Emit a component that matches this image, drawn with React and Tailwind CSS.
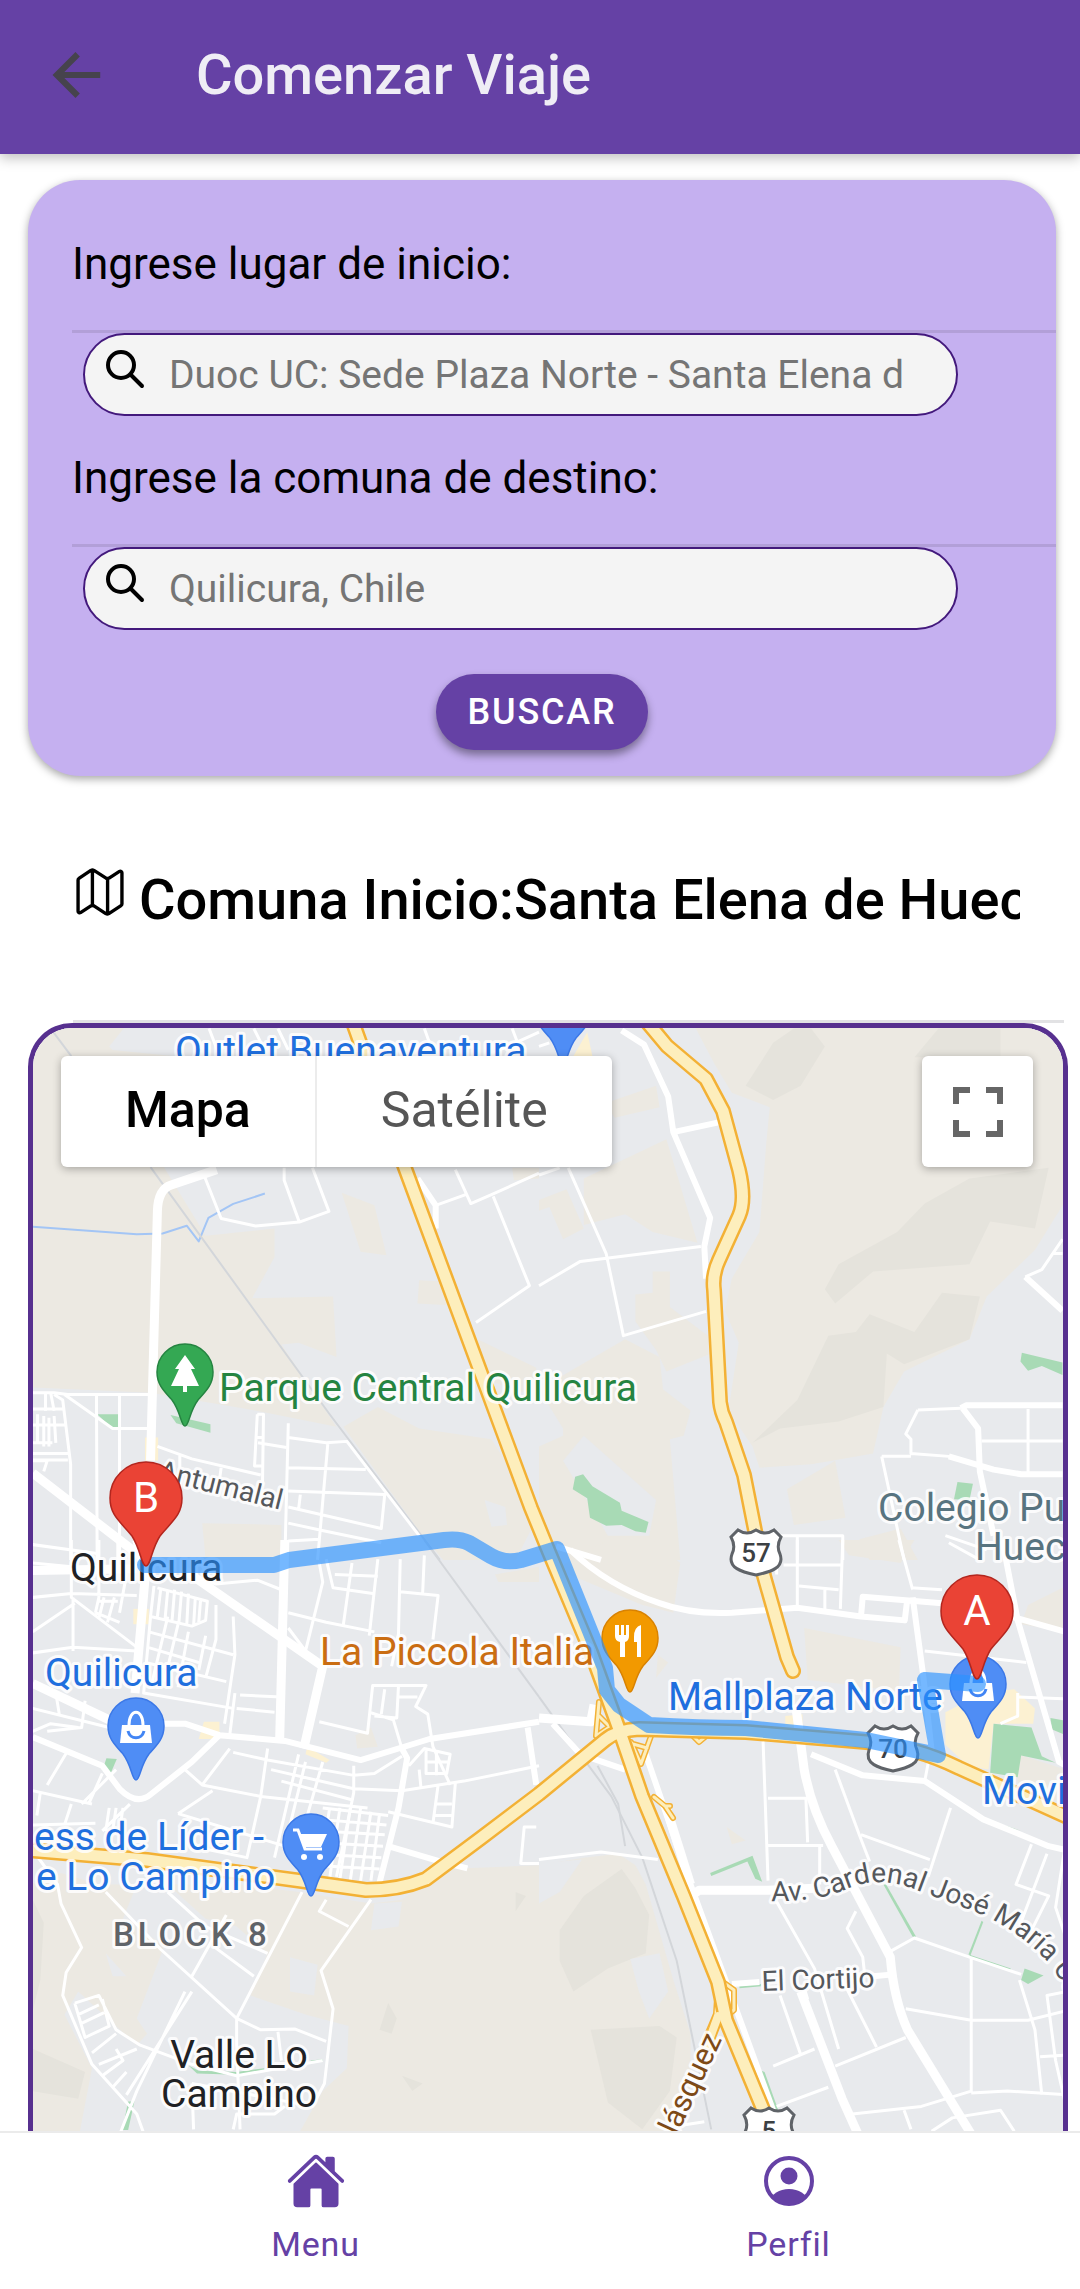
import React from "react";
import { IoArrowBackSharp, IoHome, IoMapOutline } from "react-icons/io5";

/* The map is drawn from four survey tiles, each with its own grid. */
const TILES = [
  {
    at: "translate(0 1000) scale(.3444 .3571)",
    land: [
      "M90 60H540L480 470L600 660L800 640V720L735 835L970 830L980 1000L870 960L820 965L980 1195L720 1145L440 1100L90 1085Z",
      "M1000 1195L1100 1140L1220 1200L1430 1230L1568 1440L1500 1568H1290L1230 1500Z",
      "M995 540L1090 575L1125 715L1050 705Z",
      "M1220 785L1320 790L1310 855L1215 850Z",
      "M590 1465L820 1470V1568H600Z",
      "M1390 950L1560 1030V1110L1400 1060Z",
      "M1490 470H1568V500L1495 505Z",
    ],
    shade: [],
    clear: ["M320 130L370 70H540V160L330 140Z", "M1410 1400L1470 1420L1475 1470L1430 1475Z"],
    green: ["M285 1160H347V1200H330Z", "M498 1162L614 1188V1212L515 1185Z"],
    sand: ["M424 1225H462V1290H424Z"],
    water: ["M98 635L400 656L475 654L545 632L580 676L608 610L680 571L772 542"],
    rail: ["M150 80L210 157", "M440 468L960 1160L1280 1568"],
    minor: [
      "M595 490L645 612L745 633L872 622L958 592L910 470M828 470V505L872 622",
      "M610 80L640 157M740 80L780 157M810 80L840 140M1235 80L1250 120M1430 150L1568 90M1490 80L1510 130",
      "M1325 475L1370 570L1430 545L1568 485M1268 575L1355 545M1435 550L1540 800L1385 903",
      "M98 1100H160L200 1105H436M190 1105L330 1200H436M283 1105L285 1568M350 1105V1568M160 1105L185 1120L208 1300V1568M98 1145H185M98 1190H190M98 1240H155M98 1270H200M98 1288H200",
      "M135 1100V1150M150 1100L160 1150M112 1160V1240M130 1165V1250M145 1170V1250M160 1165L165 1240",
      "M460 1250L560 1285L760 1330M525 1275V1310M645 1310L640 1345M750 1160H768L765 1360M750 1160L742 1305H765M752 1240L835 1253M750 1225H765",
      "M840 1185L830 1568M840 1225L950 1240L1010 1236L1220 1500M955 1240L925 1568M840 1310L1065 1315M840 1375L1120 1385L1110 1480L840 1420M840 1465L935 1485L1110 1520M875 1385L870 1425M840 1515L930 1510",
      "M98 1525L285 1550M98 1290L140 1290L130 1320",
    ],
    medium: ["M1215 500L1268 575V640"],
    major: ["M98 1325L425 1568", "M632 475L500 518Q462 530 460 590L440 1290"],
  },
  {
    at: "translate(540 1000) scale(.3444 .3571)",
    land: [
      "M450 70H1530V560L1440 700L1300 830L1250 950L1060 1040L1000 1140L970 1270L850 1290L790 1300L640 1310L620 1250L550 1150L580 960L540 870L560 780L640 650L660 400L670 300L560 260L510 180Z",
      "M130 500L370 390L460 680L330 650L250 600L130 630Z",
      "M190 290L340 240L350 300L220 330Z",
      "M0 560L80 530L130 640L70 670L30 580L0 590Z",
      "M330 760H380V860L490 940L500 990L370 1040L340 980L280 900V825L330 820Z",
      "M0 1090L250 950L350 1000L360 1090L440 1150L420 1220L380 1230L410 1568H60L0 1420V1250L70 1220V1200Z",
      "M720 1370L860 1290L890 1450L740 1470Z",
      "M930 1510L1050 1480L1100 1568H960Z",
    ],
    shade: [
      "M1040 650L1120 570L1250 500L1480 470L1440 640L1310 620L1250 740L970 760L860 850L830 810L870 740Z",
      "M600 240L680 120L740 80H790L830 130L760 240L680 280Z",
      "M840 940L920 930L960 880L1090 930L1170 820L1280 830L1250 950L1060 1020L1010 990L1000 1140L870 1180L700 1200L620 1240L750 1120Z",
      "M1160 80H1340V160H1090Z",
    ],
    clear: ["M1310 1568L1420 1500V1568Z", "M70 1290L130 1220L340 1400L320 1500L200 1500Z"],
    green: [
      "M105 1335L128 1328L155 1362L235 1408L240 1430L318 1462L310 1492L280 1488L240 1470L195 1472L148 1450L140 1395L98 1370Z",
      "M1402 988L1520 1015V1050L1460 1025L1420 1038L1398 1012Z",
      "M1215 1350L1260 1355L1250 1400L1205 1398Z",
    ],
    sand: ["M100 157L140 90L155 157Z"],
    water: [],
    rail: [],
    minor: [
      "M85 470L195 710L245 940L485 872M0 800L120 732L470 690M0 490L60 470M0 130L30 120",
      "M1100 1148L1225 1143M1100 1148L1065 1215L1080 1230V1270L1190 1278L1280 1305M995 1278H1080M995 1278L1060 1568M1420 1145V1325M1285 1235H1520M1520 670L1460 755L1412 775M1490 710H1520M700 1500H882V1568M750 1500V1568",
      "M1180 1500L1300 1540M1190 1520L1280 1568",
    ],
    medium: [
      "M240 85L305 125L375 270L390 370L497 610L480 690L485 780M390 370L525 342",
      "M1520 870L1412 775",
      "M1225 1143L1240 1135H1520M1230 1143L1275 1200L1280 1320L1320 1500M1190 1278L1320 1315L1400 1328H1520",
      "M50 1530L180 1568",
    ],
    major: [],
  },
  {
    at: "translate(0 1540) scale(.3444 .3827)",
    land: [
      "M90 900L180 870L290 900L400 900L360 990L480 1060L400 1250L430 1290L400 1320L230 1180L190 1240L270 1380L230 1568H90Z",
      "M490 900H700L870 920L1080 950L1170 940L1290 860L1568 850V1600H840L940 1440L1010 1380L1015 1270L890 1240L730 1190L780 1080L690 1010L600 990Z",
      "M600 0H820L800 45L600 40Z",
      "M1440 90L1568 70V110H1450Z",
      "M1080 490L1100 540L1040 545L1035 510Z",
    ],
    shade: ["M98 940L130 1000L120 1150L98 1230Z", "M98 1330L250 1390L230 1460L98 1440Z", "M1130 1210L1155 1250L1140 1290L1105 1280Z", "M1500 920L1530 930L1500 970Z", "M1170 1400L1230 1420L1200 1440Z"],
    clear: ["M1090 950L1170 945L1160 1010L1080 1020Z", "M845 1090L925 1110L915 1190L845 1180Z", "M310 1080L370 1140L330 1140Z"],
    green: ["M312 570L342 572L325 608L300 602Z", "M375 1467H393L375 1542H358Z", "M550 1373L580 1387L690 1390L770 1380V1389L690 1397L575 1394Z", "M905 1360L940 1357V1363L905 1366Z"],
    sand: ["M390 180H435V220H390Z", "M595 475H640V520H580Z", "M895 540L960 575L950 582L890 560Z"],
    water: [],
    rail: ["M1235 0L1568 410"],
    minor: [
      "M98 60L210 70M98 150L210 140L400 145M210 0V150L400 280M215 150V290M98 240L220 165M98 295L215 280L400 290M290 0V150L280 190M345 0V80L370 90L350 190M305 150L290 205M335 150L315 215M290 160H345M280 190L350 215",
      "M450 120L440 200L560 225L600 210L605 160L460 125M470 125L460 200M490 130L482 208M510 130L502 215M530 135L522 220M550 140L545 225M570 150L565 225M585 160L580 215",
      "M440 200L420 400L680 440M490 200L445 370M520 220L480 370M550 240L520 385M435 240L680 300M430 280L580 320M425 320L660 370M600 250L580 340M630 170L630 260L600 360M680 200L685 300L655 480M580 100L630 115L750 105L820 130M700 405L820 410M690 440L800 450M685 400L670 510",
      "M840 190L950 215L1090 240M840 230L890 290L940 110L930 60M950 50L970 125L1085 140M975 90L1100 95M1025 60L1000 220M1100 50L1075 250M1165 50L1160 245L1140 330M1235 40L1230 140M1165 135L1275 145L1260 260",
      "M930 475L1070 505L1085 380H1240L1210 435L1245 455L1260 540L1310 640M1160 380L1155 465L1090 460M1160 410H1215M1120 390L1110 455M1075 450L1145 470L1170 545",
      "M1220 600L1225 645M1190 590L1235 545L1310 560L1300 610H1240V550M1270 550V615M1240 580H1305M1170 655L1350 630L1568 590M1325 635L1315 750L1130 710M1275 640L1260 740M1265 690H1315M1265 720H1315",
      "M98 440L320 490M165 400L175 455M250 420L240 490L140 500M98 500L150 480L230 490M200 550L140 640M98 655L270 690M210 690L190 745M120 660L110 720M240 690L340 600M300 610L260 690M98 745L280 740M380 690L300 760M320 700L310 760M340 700L330 760M360 700L350 760",
      "M540 600L590 640L760 670L1070 700M590 640L670 545M520 715L620 655M520 715L830 800M780 545L760 670L720 830L560 800M870 560L800 830M890 580L830 800M940 580L860 830M680 555L780 575L1030 615L1090 610L1170 565M790 600L1030 650L1170 655M1030 590V660L980 880M820 630L1030 680",
      "M940 700L1130 720M930 730L1125 745M925 760L1120 770M915 790L1115 800M910 820L1110 830M905 850L1105 860M960 700L930 880M990 700L960 885M1020 700L990 885M1050 700L1020 890M1080 710L1050 890M1105 715L1080 890M1560 750H1525L1515 845H1568",
      "M98 810L170 900L180 950L240 1065L195 1130L185 1190L270 1370L400 1500L440 1600M310 920L470 1070L690 1250L690 1320L700 1540M490 920L600 1010L780 1080M660 980L560 1140M620 1060L740 1140M880 920L690 1250M690 1250L760 1280L860 1278L950 1310M950 940L930 970L1015 1010M1080 940L935 1125L970 1225L945 1420L910 1480L560 1420M810 1285L820 1360M540 1180L400 1440L330 1600M560 1180L370 1450",
      "M220 1210L290 1190L340 1280L410 1320L560 1370L690 1400L940 1360M220 1210L250 1300L320 1270L300 1200M230 1240L290 1215M235 1265L305 1235M270 1340L340 1290M290 1370L400 1330M300 1400L360 1360L340 1330M330 1430L370 1390M560 1420L565 1540M680 1540L690 1500L800 1500L830 1480",
    ],
    medium: [
      "M98 515L300 590L350 650Q400 695 440 665L560 580L640 510",
      "M480 480L540 480L640 510L830 525L1050 575L1250 520L1568 475",
      "M1170 545L1185 570L1160 700L1105 895M1535 490L1560 640M1130 800L1280 840L1360 858",
    ],
    major: ["M98 375L320 470", "M540 80L940 330L885 545", "M400 0L425 90L395 400M98 80L400 75", "M830 0L815 520"],
  },
  {
    at: "translate(540 1540) scale(.3444 .3827)",
    land: [
      "M0 850L130 830L230 820L280 850L310 900L390 1150L440 1290L440 1450L330 1600H0Z",
      "M60 70L200 0H330L410 60L390 190L300 170L60 80Z",
      "M770 230L1050 280L1045 395L780 365Z",
      "M870 0H1090L1050 60L900 40Z",
      "M1390 560L1530 600V680H1390Z",
      "M1420 170L1530 120V240L1400 220Z",
      "M545 750L600 785L560 795Z",
      "M345 300L375 320L340 360Z",
    ],
    shade: ["M60 1020L130 930L240 860L280 910L320 980L310 1080L200 1120L100 1180L60 1100Z", "M150 1280L350 1270L400 1300L380 1440L300 1540L200 1470Z"],
    clear: ["M265 1095L350 1080L375 1180L320 1250L290 1180Z", "M0 845L125 835L60 920L0 950Z"],
    green: [
      "M1320 480L1430 490L1460 565L1500 582L1400 563L1390 620L1310 608Z",
      "M1485 465L1530 472V510L1490 495Z",
      "M497 870L620 825L648 893L628 885L605 840L500 878Z",
      "M1410 1120L1465 1138L1420 1160L1400 1150Z",
      "M640 1385L655 1390L695 1490H668Z",
      "M582 1165L645 1160V1166L582 1171Z",
      "M1000 900L1008 900L1095 1037H1085Z",
      "M1285 995L1290 998L1253 1085L1247 1083Z",
      "M1250 1084L1370 1120L1368 1124L1250 1089Z",
      "M1290 727L1400 760L1290 733Z",
    ],
    sand: ["M1180 450L1290 400L1380 390L1440 440L1435 480L1320 480L1305 600L1245 590L1180 535Z", "M715 460L765 455V490H715Z"],
    water: [],
    rail: ["M0 410L120 560L210 670L300 830L400 1100L500 1540", "M170 590L230 690L250 800"],
    minor: [
      "M650 510L665 890M665 675H775L780 790M665 798H825M815 798V900M690 945L800 1120L870 1330M700 1190L760 1345M870 1130L980 1325",
      "M750 0V170M882 0L875 180M755 120L870 130M830 125V180M710 65H880M690 60V90",
      "M1120 290L1415 320M1390 410L1530 415M1080 125L1170 130M1045 0L1085 130",
      "M860 600L930 770L960 840M935 770L1135 835M1195 700L1130 880M1135 560L1120 630M920 970L895 1015L940 1090L945 1130",
      "M1020 1075L1090 1040L1250 1090L1400 1135M1255 1090V1440L1110 1480L910 1500M1065 1225L1255 1255L1420 1255L1530 1230M1475 820L1395 1010M1430 795L1385 900L1480 930L1430 1020M1525 815L1500 960L1530 1040M1395 1150L1440 1280L1460 1450M1530 1180L1475 1190L1500 1360L1530 1480M1455 1350L1540 1345M1255 1445L1360 1440L1540 1450M1140 1545L1200 1510L1340 1490L1380 1545",
      "M680 1375L800 1330M860 1375L1065 1300M690 1480L840 1430M1060 1490L1080 1540M410 1530L480 1520",
      "M0 835L180 815L345 835M770 1170L780 1200",
      "M1390 400V460L1340 480",
    ],
    medium: [
      "M90 25Q200 120 350 165Q440 195 560 190L750 177L935 200L940 148L1170 165M935 200L1062 210L1068 165",
      "M1085 150L1115 350L1140 550", "M1345 0L1390 210L1510 580L1530 590M1370 200L1530 240",
      "M40 480L120 560L250 600M310 560L440 900L700 1540",
      "M560 1160L640 1155M970 1140L1030 1135",
      "M790 560L940 615L1120 630L1290 730L1480 800L1530 810",
    ],
    major: [
      "M0 465L150 475L160 430", "M440 930L465 915L665 915L800 910",
      "M370 700L440 900", "M745 430L770 600Q790 700 850 800L1020 1090Q1030 1200 1070 1280L1260 1560",
      "M760 1180L880 1460L930 1560",
    ],
  },
];

const HIGHWAYS = [
  "M353 1020L406 1168L532 1508L550 1552L592 1652L621 1732L643 1796L685 1897L719 1982L727 2020L775 2136",
  "M648 1022L668 1046L707 1079L724 1111L740 1170Q747 1200 740 1216L720 1260Q713 1275 715 1290L721 1402Q722 1412 727 1422L745 1475L765 1576L788 1657L794 1671",
  "M28 1850L148 1860L310 1882L367 1890Q400 1890 427 1879L482 1838L540 1794L606 1740Q618 1730 640 1729L747 1732L867 1742Q915 1746 960 1768L1075 1820",
];

const RAMPS = [
  "M600 1702L597 1736L612 1726M600 1716L612 1728",
  "M632 1742L642 1764L652 1736M634 1744L648 1748",
  "M694 1736L700 1742L706 1737M655 1797L666 1806L674 1818M666 1806L671 1806",
  "M721 1980L735 1990V2010L728 2016M719 1984L717 2014L706 2040",
];

const ROUTE =
  "M146 1565H275L290 1560L445 1540Q460 1538 470 1543L492 1556Q506 1564 522 1560L558 1549L606 1668L608 1690L620 1705L650 1725Q700 1728 747 1728L867 1740L939 1755L926 1680L979 1684";

const PIN = "M0 0C-4 0-4-14-13-26C-22-36-28-42-28-54A28 28 0 0 1 28-54C28-42 22-36 13-26C4-14 4 0 0 0Z";
const RED_PIN = "M0 0C-5-1-5-16-14-30C-25-44-36-50-36-68A36 36 0 0 1 36-68C36-50 25-44 14-30C5-16 5-1 0 0Z";
const SHIELD =
  "M-18-22Q-9-16 0-22Q9-16 18-22L25-15Q20-6 24 2C29 16 14 20 0 23C-14 20-29 16-24 2Q-20-6-25-15Z";

function Poi({ x, y, fill, edge, children }) {
  return (
    <g transform={`translate(${x} ${y})`}>
      <path d={PIN} fill={fill} stroke={edge} strokeWidth="1.5" />
      {children}
    </g>
  );
}

function Bag() {
  return (
    <g transform="translate(0 -54)">
      <path d="M-14 -1H14L16 17H-16Z" fill="#fff" />
      <path d="M-7 -1C-7 -18 7 -18 7 -1" fill="none" stroke="#fff" strokeWidth="3" />
      <path d="M-8 5C-6 14 6 14 8 5" fill="none" stroke="#4285f4" strokeWidth="3" />
    </g>
  );
}

function Shield({ x, y, children }) {
  return (
    <g transform={`translate(${x} ${y})`}>
      <path d={SHIELD} fill="#fff" stroke="#5f6368" strokeWidth="3" />
      <text y="10" textAnchor="middle" fontSize="26" fontWeight="500" fill="#3c4043">{children}</text>
    </g>
  );
}

function RedPin({ x, y, children }) {
  return (
    <g transform={`translate(${x} ${y})`}>
      <path d={RED_PIN} fill="#ea4335" stroke="#b3261e" strokeWidth="1.5" />
      <text y="-54" textAnchor="middle" fontSize="42" fill="#fff">{children}</text>
    </g>
  );
}

function Streets({ kind, width, color = "#fff" }) {
  return TILES.map((t) => (
    <g key={t.at} transform={t.at} fill="none" stroke={color} strokeWidth={width} strokeLinejoin="round">
      {t[kind].map((d) => <path key={d} d={d} vectorEffect="non-scaling-stroke" />)}
    </g>
  ));
}

function Areas({ kind, color }) {
  return TILES.map((t) => (
    <g key={t.at} transform={t.at} fill={color}>
      {t[kind].map((d) => <path key={d} d={d} />)}
    </g>
  ));
}

function MapDrawing() {
  return (
    <svg
      viewBox="34 1028 1030 1103"
      preserveAspectRatio="xMidYMin slice"
      className="block h-full w-full bg-[#e8eaed]"
      role="img"
      aria-label="Mapa de la ruta"
      fontFamily="Roboto, sans-serif"
    >
      <Areas kind="land" color="#ece9e2" />
      <Areas kind="shade" color="#e5e3dc" />
      <Areas kind="clear" color="#e8eaed" />
      <Areas kind="sand" color="#fcf1d2" />
      <Areas kind="green" color="#a8dab5" />
      <Streets kind="water" width="2" color="#a3c5f5" />
      <Streets kind="rail" width="2" color="#d3d6da" />
      <Streets kind="minor" width="3" />
      <Streets kind="medium" width="6" />
      <Streets kind="major" width="9" />
      <g fill="none" strokeLinejoin="round" strokeLinecap="round">
        {RAMPS.map((d) => <path key={d} d={d} stroke="#f3b135" strokeWidth="6" />)}
        {RAMPS.map((d) => <path key={d} d={d} stroke="#fdeebc" strokeWidth="3" />)}
        {HIGHWAYS.map((d) => <path key={d} d={d} stroke="#f3b135" strokeWidth="16" />)}
        <path d="M719 2018L708 2046" stroke="#f3b135" strokeWidth="11" />
        {HIGHWAYS.map((d) => <path key={d} d={d} stroke="#fdeebc" strokeWidth="11" />)}
        <path d="M719 2016L708 2046" stroke="#fdeebc" strokeWidth="8" />
      </g>

      <Poi x={564} y={1064} fill="#4f8df5" edge="#3b78e7"><Bag /></Poi>
      <Poi x={979} y={1738} fill="#4f8df5" edge="#3b78e7"><Bag /></Poi>
      <Shield x={757} y={1552}>57</Shield>
      <Shield x={894} y={1748}>70</Shield>
      <Shield x={770} y={2130}>5</Shield>

      <g stroke="#fff" strokeOpacity=".85" strokeWidth="6" strokeLinejoin="round" style={{ paintOrder: "stroke" }} fontSize="39">
        <g fill="#1f6fde">
          <text x="176" y="1064">Outlet Buenaventura</text>
          <text x="46" y="1686">Quilicura</text>
          <text x="35" y="1850">ess de Líder -</text>
          <text x="37" y="1890">e Lo Campino</text>
          <text x="669" y="1710">Mallplaza Norte</text>
          <text x="983" y="1804">Movi</text>
        </g>
        <text x="220" y="1401" fill="#258441">Parque Central Quilicura</text>
        <text x="321" y="1665" fill="#ca6d12">La Piccola Italia</text>
        <g fill="#587480">
          <text x="879" y="1521">Colegio Pu</text>
          <text x="976" y="1560">Huec</text>
        </g>
        <g fill="#202124">
          <text x="71" y="1581">Quilicura</text>
          <text x="240" y="2068" textAnchor="middle">Valle Lo</text>
          <text x="240" y="2107" textAnchor="middle">Campino</text>
        </g>
        <text x="114" y="1946" fontSize="33" fontWeight="500" letterSpacing="4" fill="#5f6368">BLOCK 8</text>
        <g fill="#55585c">
          <text fontSize="28" transform="translate(158 1479) rotate(14)">Antumalal</text>
          <path id="avenida" d="M772 1901Q820 1902 850 1888Q880 1876 915 1889L984 1915Q1020 1932 1046 1959Q1062 1976 1076 2012" fill="none" stroke="none" />
          <text fontSize="28"><textPath href="#avenida">Av. Cardenal José María Ca</textPath></text>
          <text transform="translate(763 1991) rotate(-2)" fontSize="28">El Cortijo</text>
          <text transform="translate(678 2136) rotate(-65)" fontSize="31" fill="#7d4a17">lásquez</text>
        </g>
      </g>

      <Poi x={186} y={1426} fill="#34a853" edge="#258441">
        <path d="M0 -71L10 -57H6L14 -40H2V-34H-2V-40H-14L-6 -57H-10Z" fill="#fff" />
      </Poi>
      <Poi x={137} y={1780} fill="#4f8df5" edge="#3b78e7"><Bag /></Poi>
      <Poi x={312} y={1896} fill="#4f8df5" edge="#3b78e7">
        <path d="M-18 -66H-13L-6 -47H11" fill="none" stroke="#fff" strokeWidth="3" />
        <path d="M-12 -62H16L10 -49H-6Z" fill="#fff" />
        <circle cx="-7" cy="-39" r="3" fill="#fff" />
        <circle cx="9" cy="-39" r="3" fill="#fff" />
      </Poi>
      <Poi x={631} y={1692} fill="#f29900" edge="#d98200">
        <path d="M-15 -67V-56Q-15 -51 -10 -50V-35H-5V-50Q-1 -51 -1 -56V-67H-4V-57H-6V-67H-9V-57H-11V-67ZM11 -67Q4 -65 4 -55V-50H7V-35H11Z" fill="#fff" />
      </Poi>

      <path d={ROUTE} fill="none" stroke="#2b92ff" strokeOpacity=".65" strokeWidth="16" strokeLinejoin="round" strokeLinecap="round" />
      <RedPin x={147} y={1566}>B</RedPin>
      <RedPin x={978} y={1679}>A</RedPin>
    </svg>
  );
}

function SearchIcon() {
  return (
    <svg viewBox="0 0 40 40" className="mb-3 size-10 shrink-0" fill="none" stroke="#000" strokeWidth="4" strokeLinecap="round" aria-hidden="true">
      <circle cx="16" cy="16" r="13" />
      <path d="M26 26L37 37" />
    </svg>
  );
}

function SearchField({ id, label, text }) {
  return (
    <div className="mb-9">
      <label htmlFor={id} className="ml-11 block pb-10 text-[44px] leading-[52px] text-black">{label}</label>
      <div className="ml-11 h-[3px] bg-[#b29fd8]" />
      <div className="ml-[55px] mr-[98px] flex h-[83px] items-center rounded-full border-2 border-[#43197c] bg-[#f4f4f4] pl-5 pr-12">
        <SearchIcon />
        <input
          id={id}
          type="text"
          placeholder={text}
          className="ml-6 min-w-0 flex-1 bg-transparent text-[39px] leading-[46px] outline-none placeholder:text-[#757575]"
        />
      </div>
    </div>
  );
}

function ProfileIcon() {
  return (
    <svg viewBox="0 0 52 52" className="size-[52px]" aria-hidden="true">
      <clipPath id="ring"><circle cx="26" cy="26" r="24" /></clipPath>
      <circle cx="26" cy="26" r="23" fill="none" stroke="currentColor" strokeWidth="4" />
      <circle cx="26" cy="21" r="8.5" fill="currentColor" />
      <ellipse cx="26" cy="46" rx="18" ry="12" fill="currentColor" clipPath="url(#ring)" />
    </svg>
  );
}

export default function App() {
  return (
    <div className="flex h-screen flex-col overflow-hidden bg-white font-[Roboto,sans-serif]">
      <header className="relative flex h-[154px] shrink-0 items-center bg-[#6541a5] pb-1 pl-11 shadow-[0_4px_12px_rgba(0,0,0,0.25)]">
        <button type="button" aria-label="Volver" className="text-[#46434d]">
          <IoArrowBackSharp className="size-[66px]" />
        </button>
        <h1 className="ml-[86px] text-[56px] font-medium leading-[64px] text-[#efedf5]">Comenzar Viaje</h1>
      </header>

      <main className="flex min-h-0 flex-1 flex-col">
        <form
          className="ml-7 mr-6 mt-[26px] rounded-[52px] bg-[#c5b0f0] pb-[26px] pt-[58px] shadow-[0_3px_8px_rgba(0,0,0,0.35)]"
          onSubmit={(e) => e.preventDefault()}
        >
          <SearchField id="inicio" label="Ingrese lugar de inicio:" text="Duoc UC: Sede Plaza Norte - Santa Elena d" />
          <SearchField id="destino" label="Ingrese la comuna de destino:" text="Quilicura, Chile" />
          <div className="flex justify-center pt-2">
            <button type="submit" className="h-[76px] rounded-full bg-[#6541a5] px-8 text-[36px] font-medium leading-[44px] tracking-wider text-white shadow-[0_5px_8px_rgba(0,0,0,0.4)]">
              BUSCAR
            </button>
          </div>
        </form>

        <div className="ml-[73px] mr-4 flex h-[247px] items-center border-b-[3px] border-[#e2e2e4] pt-1">
          <IoMapOutline className="mb-4 size-[54px] shrink-0 text-black" aria-hidden="true" />
          <h2 className="ml-3 mr-11 flex-1 overflow-hidden whitespace-nowrap text-[56px] font-medium leading-[64px] text-black">
            Comuna Inicio:Santa Elena de Huec
          </h2>
        </div>

        <section className="relative ml-7 mr-3 min-h-0 flex-1 overflow-hidden rounded-t-[44px] border-x-[5px] border-t-[5px] border-[#57308f]">
          <MapDrawing />
          <div className="absolute left-7 right-[30px] top-7 flex items-start justify-between">
            <div className="flex rounded-md bg-white shadow-[0_2px_8px_rgba(0,0,0,0.3)]">
              <button type="button" className="h-[111px] border-r-2 border-[#ececec] px-16 pb-1 text-[50px] font-medium leading-[60px] text-black">Mapa</button>
              <button type="button" className="h-[111px] px-16 pb-1 text-[50px] leading-[60px] text-[#565656]">Satélite</button>
            </div>
            <button type="button" aria-label="Pantalla completa" className="flex size-[111px] items-center justify-center rounded-md bg-white shadow-[0_2px_8px_rgba(0,0,0,0.3)]">
              <svg viewBox="0 0 50 50" className="size-[50px]" aria-hidden="true">
                <path d="M3 17V3H17M33 3H47V17M47 33V47H33M17 47H3V33" fill="none" stroke="#666" strokeWidth="6" />
              </svg>
            </button>
          </div>
        </section>
      </main>

      <nav className="flex h-[158px] shrink-0 justify-center border-t-2 border-[#ebebeb] bg-white pl-6 text-[#6541a5]">
        <a href="#menu" className="flex w-[473px] flex-col items-center gap-3 pt-[18px] text-[34px] leading-[42px] tracking-wide">
          <IoHome className="size-[60px]" aria-hidden="true" />
          Menu
        </a>
        <a href="#perfil" className="flex w-[473px] flex-col items-center gap-4 pt-[22px] text-[34px] leading-[42px] tracking-wide">
          <ProfileIcon />
          Perfil
        </a>
      </nav>
    </div>
  );
}
